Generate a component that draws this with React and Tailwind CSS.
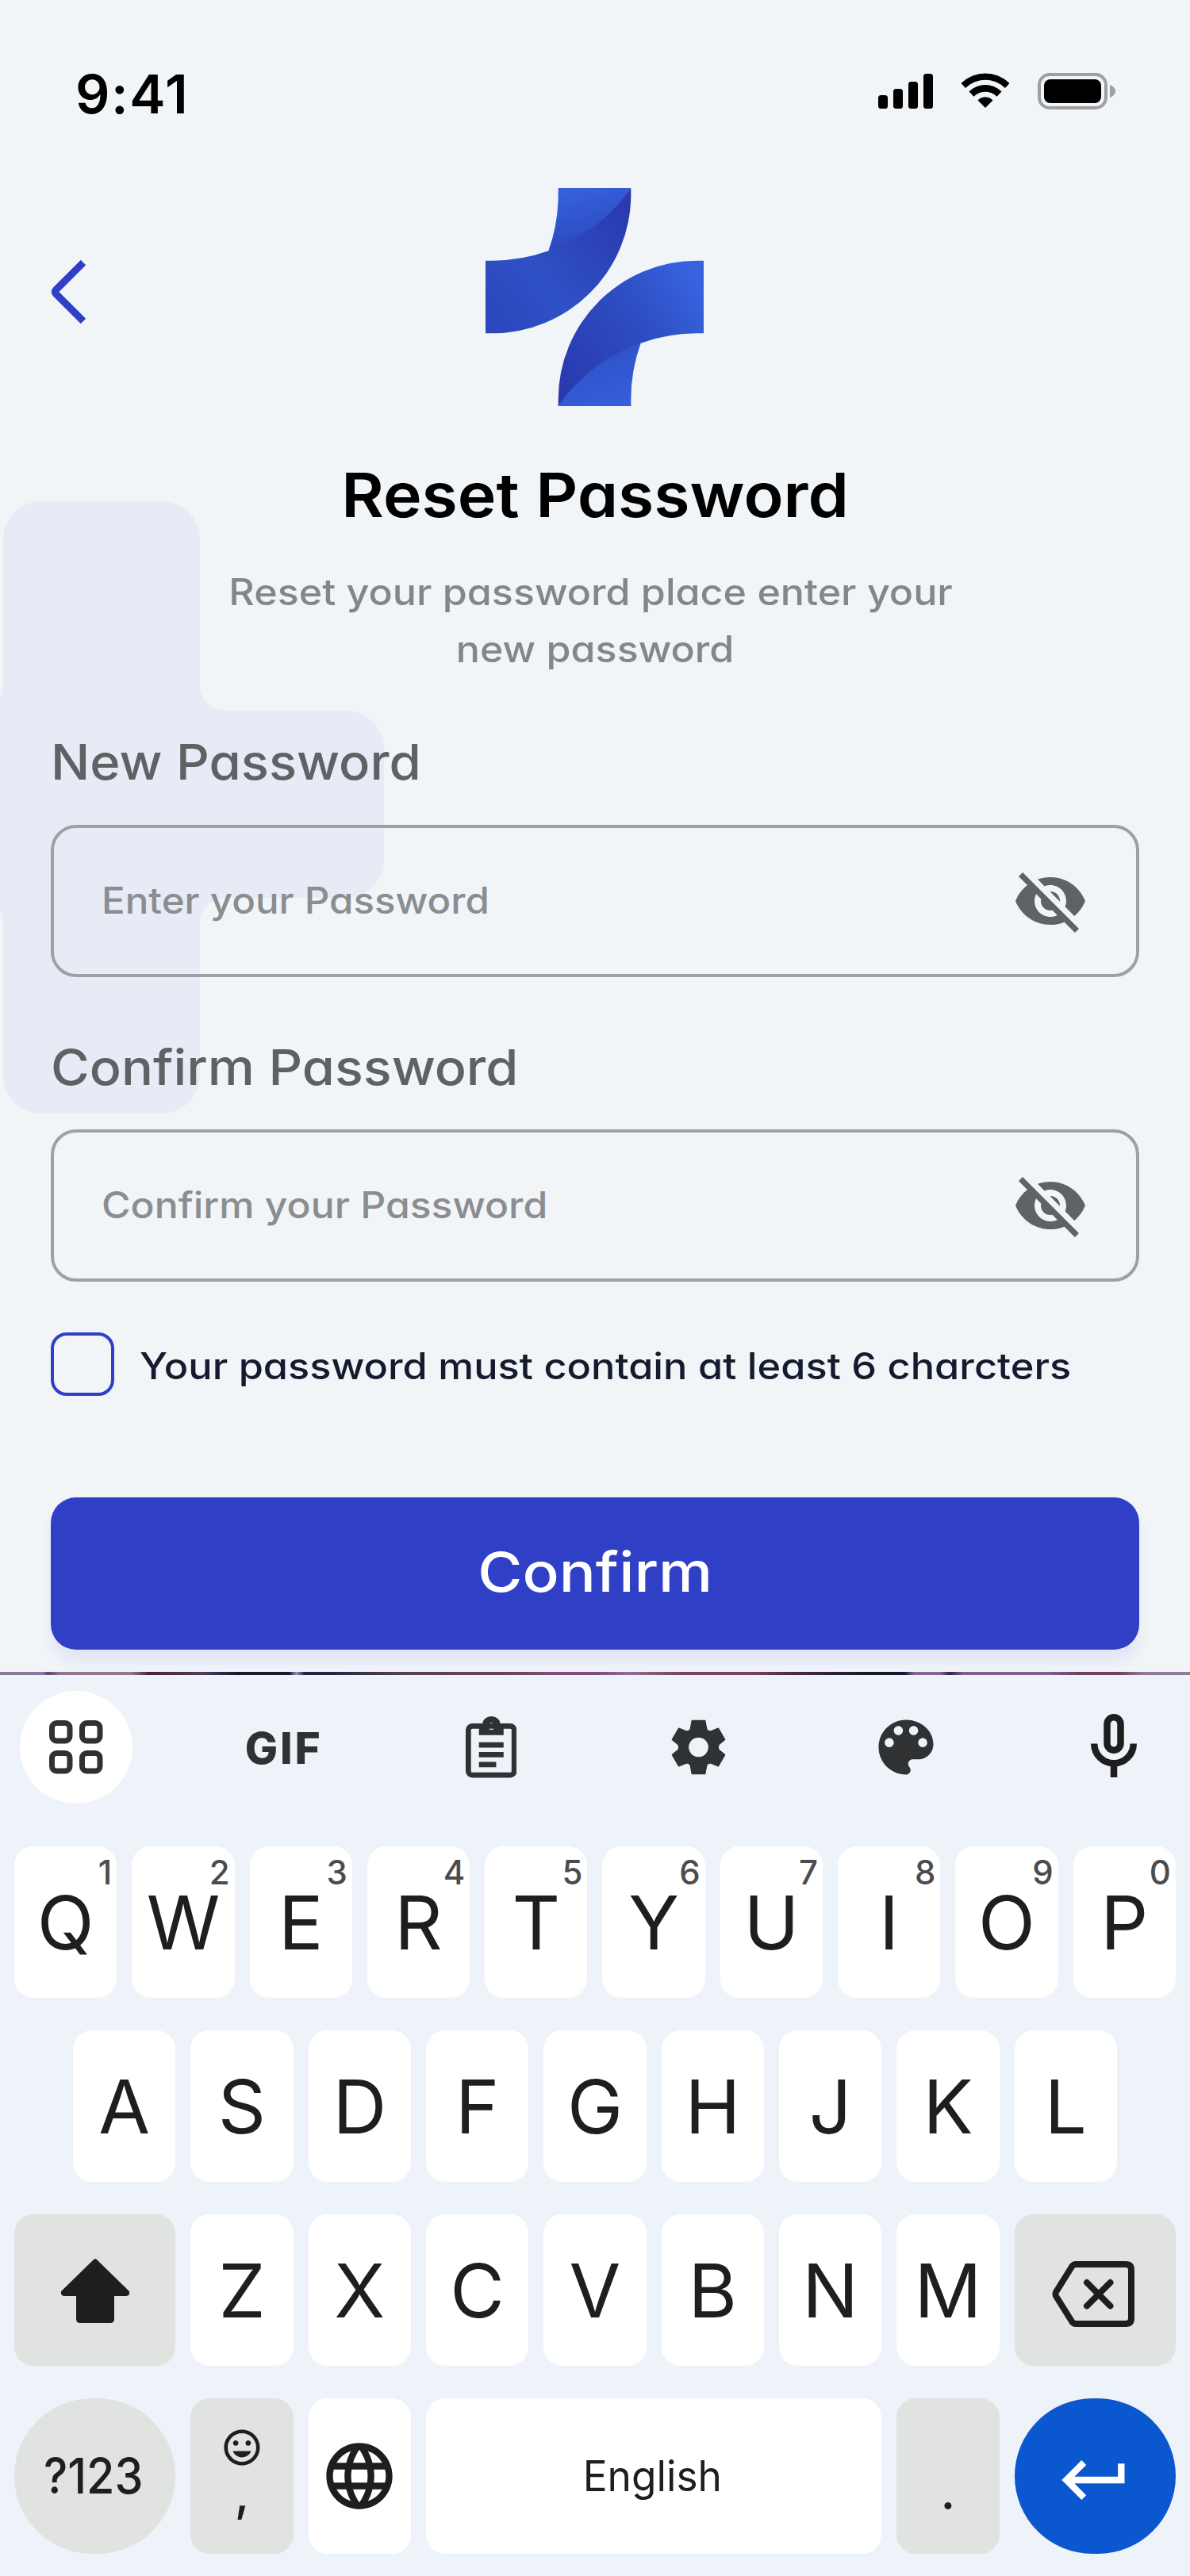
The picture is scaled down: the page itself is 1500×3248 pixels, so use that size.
import React from "react";
import {
  MdVisibilityOff,
  MdLanguage,
  MdOutlineInsertEmoticon,
  MdKeyboardReturn,
} from "react-icons/md";

function StatusIcons() {
  return (
    <div className="-mt-1.5 flex items-center gap-[35px] text-black">
      <svg width="69" height="46" viewBox="0 0 69 46" fill="currentColor">
        <rect x="0" y="28" width="12" height="17" rx="3.5" />
        <rect x="19" y="20" width="12" height="25" rx="3.5" />
        <rect x="38" y="11" width="12" height="34" rx="3.5" />
        <rect x="57" y="1" width="12" height="44" rx="3.5" />
      </svg>
      <svg width="62" height="46" viewBox="-31 -44 62 46" fill="currentColor" stroke="currentColor" strokeLinejoin="round">
        <path d="M-30-31A43.5 43.5 0 0 1 30-31L25-25.5A35.5 35.5 0 0 0-25-25.5Z" />
        <path d="M-20-20.5A29 29 0 0 1 20-20.5L14.5-14.8A20.5 20.5 0 0 0-14.5-14.8Z" />
        <path d="M-9-9.6A13 13 0 0 1 9-9.6L0-.5Z" />
      </svg>
      <svg width="98" height="46" viewBox="0 0 98 46">
        <rect x="2" y="2" width="84" height="42" rx="13" fill="none" stroke="#000" strokeOpacity=".35" strokeWidth="4" />
        <rect x="8" y="8" width="72" height="30" rx="8" fill="#000" />
        <path d="M91 15c4 1.500 7 4.500 7 8s-3 6.500-7 8z" fill="#000" fillOpacity=".35" />
      </svg>
    </div>
  );
}

function Logo() {
  return (
    <svg width="275" height="275" viewBox="0 0 825 825">
      <defs>
        <linearGradient id="bandA" gradientUnits="userSpaceOnUse" x1="0" y1="500" x2="540" y2="60">
          <stop offset="0" stopColor="#2c46bc" />
          <stop offset=".38" stopColor="#3051c6" />
          <stop offset=".62" stopColor="#2d47bd" />
          <stop offset="1" stopColor="#2a39ae" />
        </linearGradient>
        <linearGradient id="flapA" gradientUnits="userSpaceOnUse" x1="310" y1="0" x2="370" y2="230">
          <stop offset="0" stopColor="#3662de" />
          <stop offset=".7" stopColor="#2f50c7" />
          <stop offset="1" stopColor="#2b41b6" />
        </linearGradient>
        <linearGradient id="bandB" gradientUnits="userSpaceOnUse" x1="825" y1="400" x2="290" y2="760">
          <stop offset="0" stopColor="#3763df" />
          <stop offset=".35" stopColor="#2f50c5" />
          <stop offset=".6" stopColor="#2d46bc" />
          <stop offset="1" stopColor="#2a39ae" />
        </linearGradient>
        <linearGradient id="flapB" gradientUnits="userSpaceOnUse" x1="500" y1="825" x2="430" y2="610">
          <stop offset="0" stopColor="#355fdb" />
          <stop offset="1" stopColor="#2f51c8" />
        </linearGradient>
      </defs>
      <path d="M275 0H550C470 140 360 205 238 238A631 631 0 0 0 275 25Z" fill="url(#flapA)" />
      <path d="M550 0V25A525 525 0 0 1 25 550H0V275H25A631 631 0 0 0 238 238A631 631 0 0 0 550 0Z" fill="url(#bandA)" />
      <path d="M550 825H275C355 685 465 620 587 587A631 631 0 0 0 550 800Z" fill="url(#flapB)" />
      <path d="M275 825V800A525 525 0 0 1 800 275H825V550H800A631 631 0 0 0 587 587A631 631 0 0 0 275 825Z" fill="url(#bandB)" />
    </svg>
  );
}

function PasswordField({ placeholder, className }) {
  return (
    <div className="flex h-48 items-center justify-between rounded-[32px] border-4 border-[#9fa0a1] px-[60px]">
      <span className={"-mt-0.5 origin-left whitespace-nowrap text-[46px] font-medium leading-none text-[#8b8d90] " + className}>
        {placeholder}
      </span>
      <MdVisibilityOff className="size-24 text-[#606265]" />
    </div>
  );
}

function BackgroundCross() {
  return (
    <svg className="absolute left-0 top-[632px]" width="484" height="772" viewBox="0 632 484 772">
      <path
        d="M52 632H204A48 48 0 0 1 252 680V864A32 32 0 0 0 284 896H436A48 48 0 0 1 484 944V1084A48 48 0 0 1 436 1132H284A32 32 0 0 0 252 1164V1356A48 48 0 0 1 204 1404H52A48 48 0 0 1 4 1356V1164A32 32 0 0 0 -28 1132V896A32 32 0 0 0 4 864V680A48 48 0 0 1 52 632Z"
        fill="#e7ebf5"
      />
    </svg>
  );
}

function Tool({ children, active }) {
  return (
    <div className={"flex size-[142px] items-center justify-center rounded-full " + (active ? "bg-white" : "")}>
      {children}
    </div>
  );
}

function Toolbar() {
  return (
    <div className="mt-5 flex justify-between px-[25px] text-[#2f3133]">
      <Tool active>
        <svg width="68" height="68" viewBox="0 0 68 68" fill="none" stroke="currentColor" strokeWidth="7">
          <rect x="3.500" y="3.500" width="22.500" height="22.500" rx="6" />
          <rect x="41.500" y="3.500" width="22.500" height="22.500" rx="6" />
          <rect x="3.500" y="41.500" width="22.500" height="22.500" rx="6" />
          <rect x="41.500" y="41.500" width="22.500" height="22.500" rx="6" />
        </svg>
      </Tool>
      <Tool>
        <span className="mt-0.5 text-[55px] font-extrabold leading-none tracking-[0.05em]">GIF</span>
      </Tool>
      <Tool>
        <svg width="64.500" height="77.500" viewBox="0 0 193 232" fill="currentColor">
          <rect x="10" y="37" width="173" height="185" rx="15" fill="none" stroke="currentColor" strokeWidth="20" />
          <path fillRule="evenodd" d="M50 27H64A33 27 0 0 1 130 27H143V71H50ZM97 25a13 13 0 1 0 .01 0Z" />
          <path d="M50 98H143V118H50ZM50 135H143V155H50ZM50 172H115V192H50Z" />
        </svg>
      </Tool>
      <Tool>
        <svg width="69" height="70" viewBox="-104 -105 208 210" fill="currentColor" stroke="currentColor" strokeWidth="4" strokeLinejoin="round">
          <path
            fillRule="evenodd"
            d="M-31-68L-25-101H25L31-68Q38-58 47-61L75-72 100-29 77-10Q72 0 77 10L100 29 75 72 47 61Q38 58 31 68L25 101H-25L-31 68Q-38 58-47 61L-75 72-100 29-77 10Q-72 0-77-10L-100-29-75-72-47-61Q-38-58-31-68ZM0-39a39 39 0 1 0 .01 0Z"
          />
        </svg>
      </Tool>
      <Tool>
        <svg width="92" height="92" viewBox="0 0 24 24" fill="currentColor">
          <path d="M12 3c-4.970 0-9 4.030-9 9s4.030 9 9 9c.83 0 1.500-.67 1.500-1.500 0-.39-.15-.74-.39-1.010-.23-.26-.38-.61-.38-.99 0-.83.67-1.500 1.500-1.500H16c2.760 0 5-2.240 5-5 0-4.420-4.030-8-9-8zm-5.500 9c-.83 0-1.500-.67-1.500-1.500S5.670 9 6.500 9 8 9.670 8 10.500 7.330 12 6.500 12zm3-4C8.670 8 8 7.330 8 6.500S8.670 5 9.500 5s1.500.67 1.500 1.500S10.330 8 9.500 8zm5 0c-.83 0-1.500-.67-1.500-1.500S13.670 5 14.500 5s1.500.67 1.500 1.500S15.330 8 14.500 8zm3 4c-.83 0-1.500-.67-1.500-1.500S16.670 9 17.500 9s1.500.67 1.500 1.500-.67 1.500-1.500 1.500z" />
        </svg>
      </Tool>
      <Tool>
        <svg className="-mt-1 text-[#1e1e1e]" width="58" height="80" viewBox="0 0 58 80" fill="none" stroke="currentColor" strokeWidth="8.500">
          <rect x="20.500" y="4.250" width="17" height="41.500" rx="8.500" />
          <path d="M4.250 37.500a24.750 24.750 0 0 0 49.500 0M29 62V80" />
        </svg>
      </Tool>
    </div>
  );
}

function Key({ label, hint }) {
  return (
    <div className="relative flex flex-1 items-center justify-center rounded-3xl bg-white">
      <span className="text-[94px] leading-[72px]">{label}</span>
      {hint && (
        <span className="absolute right-1.5 top-[17px] text-[42px] font-medium leading-[32px] text-[#4c4c4c]">{hint}</span>
      )}
    </div>
  );
}

function Keyboard() {
  return (
    <section className="h-[1140px] bg-[#eef3fa] text-[#1e1e1e]">
      <div className="h-1 bg-[linear-gradient(90deg,#8c7a9c_0%,#8c7a9c_3.6%,#5c4470_4%,#8f7795_5%,#8f7795_11%,#4a2338_12.5%,#4f3c5c_17%,#151a30_20%,#151a30_24.3%,#a08cae_24.9%,#252540_25.6%,#252540_28%,#55405a_34%,#6a4458_43%,#7f4d78_46%,#7f4d78_50%,#8f6f95_53%,#7a4460_57%,#7a4460_63%,#45284a_67%,#16182e_73%,#16182e_76%,#84689a_76.8%,#84689a_79%,#332344_79.8%,#7d628a_81%,#7d628a_88%,#6f3e60_91%,#6f3e60_94%,#917b98_96%)]" />
      <Toolbar />
      <div className="mt-[54px] flex flex-col gap-[41px] px-[18px]">
        <div className="flex h-[191px] gap-[19px]">
          {[..."QWERTYUIOP"].map((k, i) => (
            <Key key={k} label={k} hint={String((i + 1) % 10)} />
          ))}
        </div>
        <div className="flex h-[191px] gap-[19px] px-[74px]">
          {[..."ASDFGHJKL"].map((k) => (
            <Key key={k} label={k} />
          ))}
        </div>
        <div className="flex h-[191px] gap-[19px]">
          <div className="flex w-[203.400px] items-center justify-center rounded-3xl bg-[#e0e3df]">
            <svg width="88" height="82" viewBox="0 0 88 82" fill="currentColor" stroke="currentColor" strokeWidth="4" strokeLinejoin="round">
              <path d="M44 3L85 43Q86 46 83 46H66V77Q66 80 63 80H25Q22 80 22 77V46H5Q2 46 3 43Z" />
            </svg>
          </div>
          {[..."ZXCVBNM"].map((k) => (
            <Key key={k} label={k} />
          ))}
          <div className="flex w-[203.400px] items-center justify-center rounded-3xl bg-[#e0e3df]">
            <svg className="-ml-1 mt-2.5" width="104" height="83" viewBox="0 0 104 83" fill="none" stroke="currentColor" strokeWidth="8" strokeLinejoin="round" strokeLinecap="round">
              <path d="M30 4H93Q100 4 100 11V72Q100 79 93 79H30Q27 79 25 76L5 44Q4 41.500 5 39L25 7Q27 4 30 4Z" />
              <path d="M44 27L73.500 56.500M73.500 27L44 56.500" />
            </svg>
          </div>
        </div>
        <div className="flex h-[196px] gap-[19px]">
          <div className="flex w-[203.400px] items-center justify-center rounded-full bg-[#e0e3df]">
            <span className="-ml-1 scale-x-[0.926] text-[62px] font-medium leading-none">?123</span>
          </div>
          <div className="flex w-[129.300px] flex-col items-center rounded-3xl bg-[#e0e3df] pt-[35px]">
            <MdOutlineInsertEmoticon className="size-[54px]" />
            <span className="text-[62px] font-medium leading-none">,</span>
          </div>
          <div className="flex w-[129.300px] items-center justify-center rounded-3xl bg-white">
            <MdLanguage className="size-[100px]" />
          </div>
          <div className="flex flex-1 items-center justify-center rounded-3xl bg-white">
            <span className="-ml-1 scale-x-[0.97] text-[53px] leading-none">English</span>
          </div>
          <div className="flex w-[129.300px] justify-center rounded-3xl bg-[#e0e3df] pt-[87px]">
            <span className="text-[62px] font-medium leading-none">.</span>
          </div>
          <div className="flex w-[203.400px] items-center justify-center rounded-full bg-[#0b57d0]">
            <MdKeyboardReturn className="mt-2.5 size-[100px] text-white" />
          </div>
        </div>
      </div>
    </section>
  );
}

export default function App() {
  return (
    <div className="w-[1500px] overflow-hidden bg-[#f1f5f8] font-['Inter',sans-serif]">
      <main className="relative h-[2108px] overflow-hidden [font-feature-settings:'cv11']">
        <BackgroundCross />
        <div className="relative">
          <div className="flex h-[236px] items-center justify-between pl-[95px] pr-[94px]">
            <span className="text-[68px] font-semibold leading-none tracking-[0.023em] text-black">9:41</span>
            <StatusIcons />
          </div>
          <div className="px-16">
            <div className="grid h-[276px] grid-cols-3 items-center">
              <svg className="-mt-3" width="45" height="80" viewBox="0 0 45 80" fill="none" stroke="#3040c6" strokeWidth="9">
                <path d="M41 3L6.500 37.500Q4 40 6.500 42.500L41 77" />
              </svg>
              <div className="flex justify-center">
                <Logo />
              </div>
            </div>
            <h1 className="mt-16 scale-x-[1.069] text-center text-[77px] font-semibold leading-[96px] text-black">
              Reset Password
            </h1>
            <p className="mt-[38px] scale-x-[1.091] text-center text-[46px] font-medium leading-[72px] text-[#858688]">
              <span className="block pr-2.5">Reset your password place enter your</span>
              <span className="block">new password</span>
            </p>
            <h2 className="mt-[75px] origin-left scale-x-[1.052] text-[62px] font-medium leading-[64px] text-[#5f6163]">
              New Password
            </h2>
            <div className="mt-[47px]">
              <PasswordField placeholder="Enter your Password" className="scale-x-[1.071]" />
            </div>
            <h2 className="mt-[82px] origin-left scale-x-[1.073] text-[62px] font-medium leading-[64px] text-[#5f6163]">
              Confirm Password
            </h2>
            <div className="mt-[46px]">
              <PasswordField placeholder="Confirm your Password" className="scale-x-[1.084]" />
            </div>
            <div className="mt-16 flex h-20 items-center gap-8">
              <span className="size-20 rounded-[20px] border-4 border-[#3040c6]" />
              <span className="mt-1 origin-left scale-x-[1.098] whitespace-nowrap text-[46px] font-medium leading-none text-[#141b2e]">
                Your password must contain at least 6 charcters
              </span>
            </div>
            <button className="mt-32 block h-48 w-full rounded-[32px] bg-[#3040c6] pb-1 text-[69px] font-medium leading-none text-white shadow-[0_16px_16px_rgba(48,64,198,0.08)]">
              <span className="inline-block scale-x-[1.11]">Confirm</span>
            </button>
          </div>
        </div>
      </main>
      <Keyboard />
    </div>
  );
}
